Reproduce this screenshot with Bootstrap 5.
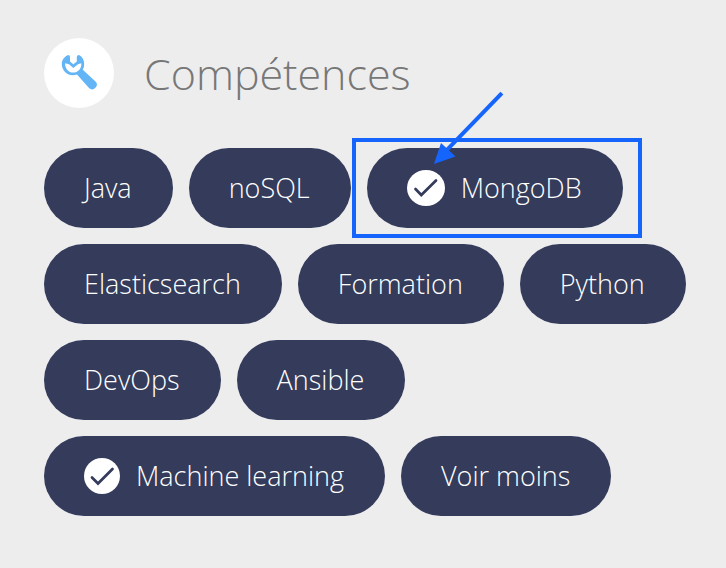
<!DOCTYPE html>
<html lang="fr">
<head>
<meta charset="utf-8">
<meta name="viewport" content="width=device-width, initial-scale=1">
<title>Compétences</title>
<link href="https://cdn.jsdelivr.net/npm/bootstrap@5.3.0/dist/css/bootstrap.min.css" rel="stylesheet">
<style>
body { background: #ededed; font-family: "Open Sans", sans-serif; font-weight: 300; }
.skills { padding: 38px 30px 52px 44px; }
.skills-head { gap: 30px; margin-bottom: 40px; }
.skills-icon { width: 70px; height: 70px; }
.skills-title { padding-top: 2px; font-size: 43px; line-height: 68px; font-weight: 300; color: #777; }
.skill-list { gap: 16px; }
.skill { height: 80px; padding: 0 41px 0 40px; border: 0; background: #343b5b; color: #fff; font-size: 27px; line-height: 40px; font-weight: 300; }
.skill:hover { background: #414970; color: #fff; }
.callout { inset: -10px -19px -10px -15px; border: 4px solid #1565fc; pointer-events: none; }
.callout-arrow { left: 63px; top: -58px; pointer-events: none; }
</style>
</head>
<body>
<main class="skills">
  <header class="skills-head d-flex align-items-center">
    <span class="skills-icon rounded-circle bg-white flex-shrink-0">
      <svg class="d-block" width="70" height="70" viewBox="0 0 70 70" fill="#64b5f6" aria-hidden="true">
        <path fill-rule="evenodd" d="M24 17Q26 17 26 19V23.500L29.300 26.300L32.800 23.500V19Q32.800 17 35 17C38.500 18.800 40.200 22 40.200 26Q40.200 29.500 38.800 31.800L51.500 43.500A4.600 4.600 0 0 1 45 50L33 36.500Q31 37.300 29 37.300A11.300 11.300 0 0 1 17.800 26C17.800 22 20.500 18.500 24 17ZM21.200 25.200C20.800 30.500 24.500 34.600 29.200 34.600S37.800 30.500 37.300 25.200L34 26.200L29.300 30L25 26.200Z"/>
      </svg>
    </span>
    <h1 class="skills-title mb-0">Compétences</h1>
  </header>
  <div class="skill-list d-flex flex-wrap">
    <button type="button" class="skill btn rounded-pill">Java</button>
    <button type="button" class="skill btn rounded-pill">noSQL</button>
    <div class="position-relative">
      <button type="button" class="skill btn rounded-pill d-flex align-items-center gap-3">
        <svg width="38" height="36" viewBox="0 0 38 36" aria-hidden="true"><rect width="38" height="36" rx="19" ry="18" fill="#fff"/><path d="M8.500 19L14.300 25L29 10.500" fill="none" stroke="#343b5b" stroke-width="2.700" stroke-linecap="round"/></svg>
        MongoDB</button>
      <span class="callout position-absolute"></span>
      <svg class="callout-arrow position-absolute" width="76" height="76" viewBox="0 0 76 76" aria-hidden="true"><path d="M70.500 4.500L14 63" stroke="#1565fc" stroke-width="4" stroke-linecap="square"/><path d="M4 74L11 53L25.500 66.500Z" fill="#1565fc"/></svg>
    </div>
    <button type="button" class="skill btn rounded-pill">Elasticsearch</button>
    <button type="button" class="skill btn rounded-pill">Formation</button>
    <button type="button" class="skill btn rounded-pill">Python</button>
    <button type="button" class="skill btn rounded-pill">DevOps</button>
    <button type="button" class="skill btn rounded-pill">Ansible</button>
    <button type="button" class="skill btn rounded-pill d-flex align-items-center gap-3">
      <svg width="36" height="36" viewBox="0 0 36 36" aria-hidden="true"><circle cx="18" cy="18" r="18" fill="#fff"/><path d="M8 19.500L14 25.500L28.500 11" fill="none" stroke="#343b5b" stroke-width="2.700" stroke-linecap="round"/></svg>
      Machine learning</button>
    <button type="button" class="skill btn rounded-pill">Voir moins</button>
  </div>
</main>
<script src="https://cdn.jsdelivr.net/npm/bootstrap@5.3.0/dist/js/bootstrap.bundle.min.js"></script>
</body>
</html>
